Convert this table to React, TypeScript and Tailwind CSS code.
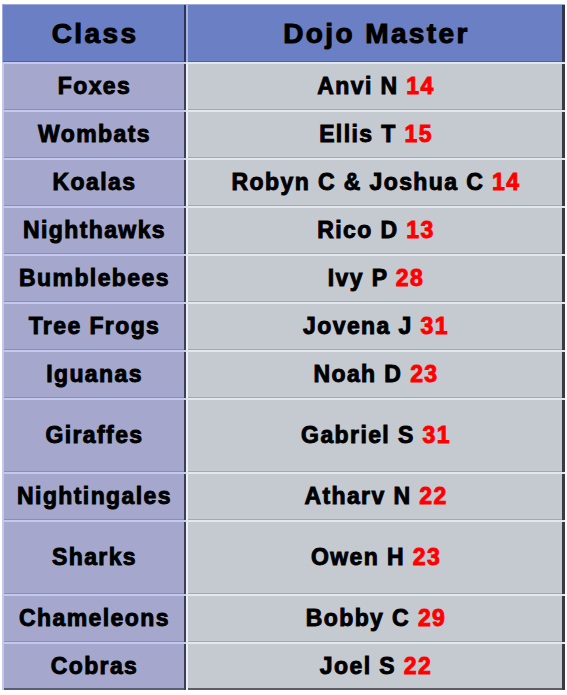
import React from "react";

type Row = { cls: string; name: string; num: string; tall?: boolean };

const rows: Row[] = [
  { cls: "Foxes", name: "Anvi N", num: "14" },
  { cls: "Wombats", name: "Ellis T", num: "15" },
  { cls: "Koalas", name: "Robyn C & Joshua C", num: "14" },
  { cls: "Nighthawks", name: "Rico D", num: "13" },
  { cls: "Bumblebees", name: "Ivy P", num: "28" },
  { cls: "Tree Frogs", name: "Jovena J", num: "31" },
  { cls: "Iguanas", name: "Noah D", num: "23" },
  { cls: "Giraffes", name: "Gabriel S", num: "31", tall: true },
  { cls: "Nightingales", name: "Atharv N", num: "22" },
  { cls: "Sharks", name: "Owen H", num: "23", tall: true },
  { cls: "Chameleons", name: "Bobby C", num: "29" },
  { cls: "Cobras", name: "Joel S", num: "22" },
];

const bodyText =
  "text-[23px] font-bold tracking-[1.4px] pl-[1px] [-webkit-text-stroke:0.9px_currentColor] text-black font-['Liberation_Sans',Arial,sans-serif] leading-none whitespace-nowrap";

const headText =
  "text-[28px] font-bold tracking-[2.4px] pl-[2px] pt-[2px] [-webkit-text-stroke:1px_black] text-black font-['Liberation_Sans',Arial,sans-serif] leading-none whitespace-nowrap";

export default function App() {
  return (
    <div className="w-[567px] h-[695px] bg-white pt-[4px] pl-[2px]">
      <div className="grid grid-cols-[184px_379px] w-[563px]">
        <div className="h-[58px] flex items-center justify-center bg-[#6b7fc4] shadow-[inset_0_1px_0_#9eabdd,inset_1px_0_0_#9eabdd,inset_-2px_0_0_#2f3550,inset_0_-1px_0_#52609e]">
          <span className={headText}>Class</span>
        </div>
        <div className="h-[58px] flex items-center justify-center bg-[#6b7fc4] shadow-[inset_0_1px_0_#9eabdd,inset_2px_0_0_#a8b4e4,inset_-3px_0_0_#33364a,inset_0_-1px_0_#52609e]">
          <span className={headText}>Dojo Master</span>
        </div>
        {rows.map((r, i) => {
          const last = i === rows.length - 1;
          const h = r.tall ? "h-[74px]" : "h-[48px]";
          return (
            <React.Fragment key={r.cls}>
              <div
                className={`${h} flex items-center justify-center bg-[#a5a8cc] ${
                  last
                    ? "shadow-[inset_0_2px_0_#c4c8ee,inset_2px_0_0_#c4c8ee,inset_-2px_0_0_#3e3e58,inset_0_-2px_0_#5a5c78]"
                    : "shadow-[inset_0_2px_0_#c4c8ee,inset_2px_0_0_#c4c8ee,inset_-2px_0_0_#3e3e58,inset_0_-1px_0_#8a8db4]"
                }`}
              >
                <span className={bodyText}>{r.cls}</span>
              </div>
              <div
                className={`${h} flex items-center justify-center bg-[#c5c9d0] ${
                  last
                    ? "shadow-[inset_0_2px_0_#e2e7ee,inset_2px_0_0_#eef1f5,inset_-3px_0_0_#3a3a42,inset_0_-2px_0_#5c5e66]"
                    : "shadow-[inset_0_2px_0_#e2e7ee,inset_2px_0_0_#eef1f5,inset_-3px_0_0_#3a3a42,inset_0_-1px_0_#a5a8b0]"
                }`}
              >
                <span className={bodyText}>
                  {r.name} <span className="text-[#ff0000]">{r.num}</span>
                </span>
              </div>
            </React.Fragment>
          );
        })}
      </div>
    </div>
  );
}
